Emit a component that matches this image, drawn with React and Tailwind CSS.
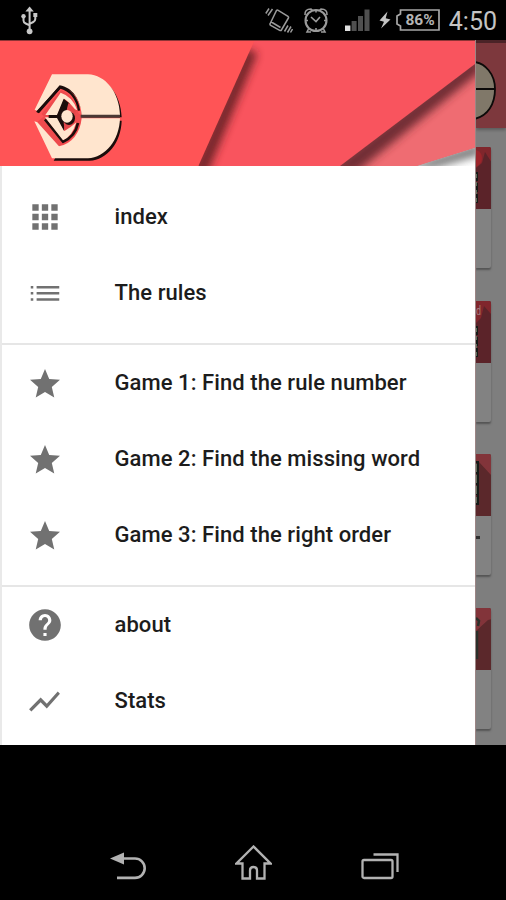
import React from 'react';

const sections = [
    [
        { icon: 'grid', label: 'index' },
        { icon: 'list', label: 'The rules' },
    ],
    [
        { icon: 'star', label: 'Game 1: Find the rule number' },
        { icon: 'star', label: 'Game 2: Find the missing word' },
        { icon: 'star', label: 'Game 3: Find the right order' },
    ],
    [
        { icon: 'help', label: 'about' },
        { icon: 'stats', label: 'Stats' },
    ],
];

// 24x24 material shapes
const iconPaths = {
    grid: 'M4 8h4V4H4v4zm6 12h4v-4h-4v4zm-6 0h4v-4H4v4zm0-6h4v-4H4v4zm6 0h4v-4h-4v4zm6-10v4h4V4h-4zm-6 4h4V4h-4v4zm6 6h4v-4h-4v4zm0 6h4v-4h-4v4z',
    list: 'M3 13h1.600v-1.600H3zm0 3.900h1.600v-1.600H3zm0-7.800h1.600V7.500H3zm3.700 3.900h14.300v-1.600H6.700zm0 3.900h14.300v-1.600H6.700zm0-9.400v1.600h14.300V7.500z',
    star: 'M12 17.27L18.18 21l-1.64-7.03L22 9.24l-7.19-.61L12 2 9.19 8.63 2 9.24l5.46 4.73L5.82 21z',
    help: 'M12 2C6.48 2 2 6.48 2 12s4.480 10 10 10 10-4.480 10-10S17.520 2 12 2zm1 17h-2v-2h2v2zm2.070-7.750l-.9.920C13.450 12.900 13 13.500 13 15h-2v-.5c0-1.100.450-2.100 1.170-2.830l1.240-1.260c.370-.360.590-.860.590-1.410 0-1.100-.9-2-2-2s-2 .9-2 2H8c0-2.210 1.790-4 4-4s4 1.790 4 4c0 .880-.360 1.680-.930 2.250z',
    stats: 'M3.500 18.490l6-6.010 4 4L22 6.920l-1.410-1.410-7.090 7.970-4-4L2 16.990z',
};

const iconSizes = {
    grid: 'size-[38px]',
    list: 'size-[38px]',
    star: 'mt-[2px] size-[36px]',
    help: 'size-[38px]',
    stats: 'size-[37px]',
};

const StatusBar = () => (
    <div className="flex h-10 shrink-0 items-center bg-black pr-[9px]">
        {/* USB */}
        <svg className="ml-5 h-[30px] w-[20px]" viewBox="0 0 20 30" fill="none" stroke="#c8c8c8" strokeWidth="2">
            <path d="M9.600 26V6M3.500 11v4.500q0 2 2.200 3l3.900 1.800M15.300 9v5q0 2-2 3l-3.700 1.800" />
            <path d="M9.600 1.500l4.200 5h-8.400z" fill="#c8c8c8" stroke="none" />
            <circle cx="9.600" cy="26.300" r="2.900" fill="#c8c8c8" stroke="none" />
            <circle cx="3.500" cy="11.300" r="2.200" fill="#c8c8c8" stroke="none" />
            <path d="M13.300 8h4v4h-4z" fill="#c8c8c8" stroke="none" />
        </svg>
        {/* Vibrate */}
        <svg className="ml-[225px] h-[28px] w-[28px]" viewBox="0 0 28 28" fill="none" stroke="#9b9b9b" strokeWidth="1.500">
            <path d="M11.500 4.500q.7-.8 1.700-.2l9.800 6q1 .7.400 1.700l-7 12q-.6 1-1.700.3l-9-5q-1.200-.7-.5-1.800zM5.500 15.500l10 6" />
            <path d="M.8 7.500l3.200-5M3 9.500L7.500 3M19.500 25.500l3.500-6M22.500 26.500l3.500-6M25.500 26.500l2-3.500" />
        </svg>
        {/* Alarm */}
        <svg className="ml-[10px] h-[28px] w-[26px]" viewBox="0 0 26 28" fill="none" stroke="#9b9b9b" strokeWidth="2.100">
            <circle cx="13" cy="14.500" r="10.500" />
            <path d="M8 11l5 4.500 4-4.500" strokeWidth="1.600" />
            <path d="M5.500 23L4 26h4M20.500 23l1.500 3h-4M2 9q-.5-6 6-6l1.500 1.600M24 9q.5-6-6-6l-1.500 1.600M13 4.500v2M13 22v2M3 14.500h2M21 14.500h2" strokeWidth="1.600" />
        </svg>
        {/* Signal */}
        <svg className="ml-[16px] h-[24px] w-[25px]" viewBox="0 0 25 24" fill="#505050">
            <path d="M0 17.500h5.400V23H0z" fill="#e0e0e0" />
            <path d="M6.600 13h5v10h-5zM13 8h5v15h-5zM19.500 1.500h5V23h-5z" />
        </svg>
        {/* Charging bolt */}
        <svg className="ml-[9px] h-[20px] w-[12px]" viewBox="0 0 12 20" fill="#c4c4c4">
            <path d="M8.500 1.500L.5 10.500l4.500 1.200L2 18.500l9.500-9-4.800-1.300z" />
        </svg>
        <div className="relative ml-[5px] flex h-[22px] w-[44px] items-center justify-center">
            <svg className="absolute inset-0 h-[22px] w-[44px]" viewBox="0 0 44 22" fill="none" stroke="#a8a8a8" strokeWidth="1.700">
                <path d="M4.500 1H43v20H4.500v-4L1 15V7l3.500-2z" />
            </svg>
            <span className="relative mt-px ml-1 text-[15.500px] leading-none font-bold text-[#b4b4b4]">86%</span>
        </div>
        <span className="mt-[3px] ml-auto text-[25px] leading-none text-[#c4c4c4]">4:50</span>
    </div>
);

const DrawerHeader = () => (
    <svg className="block h-[126px] w-full shrink-0" viewBox="0 0 1425 378" preserveAspectRatio="none">
        <defs>
            <filter id="soft" x="-20%" y="-20%" width="140%" height="140%">
                <feGaussianBlur stdDeviation="13" />
            </filter>
            <clipPath id="fold1">
                <path d="M764 0L595 378H1425V0z" />
            </clipPath>
            <clipPath id="fold2">
                <path d="M1020 378L1425 72V378z" />
            </clipPath>
            <clipPath id="fold3">
                <path d="M1250 378L1425 323V378z" />
            </clipPath>
        </defs>
        <path d="M0 0H1425V378H0z" fill="#ff5456" />
        <g clipPath="url(#fold1)">
            <path d="M764 0L595 378H1425V0z" fill="#f9545e" />
            <path d="M735 25L575 400H622L772 40z" fill="#6b2428" opacity=".93" filter="url(#soft)" />
        </g>
        <g clipPath="url(#fold2)">
            <path d="M1020 378L1425 72V378z" fill="#ef6c72" />
            <path d="M970 400L1440 35V95L1070 395z" fill="#6b2c30" opacity=".95" filter="url(#soft)" />
        </g>
        <g clipPath="url(#fold3)">
            <path d="M1250 378L1425 323V378z" fill="#fff" />
            <path d="M1200 385L1440 310V345L1300 385z" fill="#777" filter="url(#soft)" />
        </g>
        <path d="M0 0H1425V3H0z" fill="#8f3435" />

        {/* Logo: each cream part sits on its own dark offset copy */}
        <g transform="translate(84 78)">
            <g fill="#1b0d0b" transform="translate(5 7)">
                <path d="M72 25H180C232 27 274 78 276 147H157C158 100 132 64 95 58L28 135L20 131z" />
                <path d="M93 241C132 234 156 202 161 157H276C274 223 232 275 180 277H72z" />
            </g>
            {/* gap between the outer shell and the eye */}
            <path d="M40 144L99 73Q137 85 151 142L165 151L160 168Q144 224 93 242L28 168L48 151z" fill="#ee4a4d" />
            <g fill="#ffe5ce">
                <path d="M72 25H180C232 27 274 78 276 147H161C158 100 132 64 95 58L28 135L20 131z" />
                <path d="M19 166L28 169L93 241C132 234 156 202 161 157H276C274 223 232 275 180 277H72z" />
            </g>
            <path d="M28 138L96 64Q144 77 153 134" fill="none" stroke="#1b0d0b" strokeWidth="7" />
            <path d="M51 160L105 227Q142 211 150 171" fill="none" stroke="#1b0d0b" strokeWidth="8" />
            <g fill="#ffe5ce">
                <path d="M52 147L98 80Q135 92 148 133L141 130Q126 109 109 98L88 147z" />
                <path d="M51 154H88L109 195Q127 186 145 169Q132 212 105 223z" />
            </g>
            <path d="M62 147H87L107 98L124 112L120 130L101 151L110 172L108 194L87 156H62z" fill="#1b0d0b" />
            <path d="M121 111L143 135L141 167L110 194L107 170z" fill="#e3474a" />
            <ellipse cx="123" cy="157" rx="18" ry="20" fill="#1b0d0b" />
            <ellipse cx="117" cy="151" rx="17" ry="19" fill="#ffe5ce" />
            <path d="M158 151H276" stroke="#4a3834" strokeWidth="9" />
        </g>
    </svg>
);

const Drawer = () => (
    <div className="flex w-[475px] shrink-0 flex-col bg-white">
        <DrawerHeader />
        <div className="flex-1 border-l-2 border-[#e9e9e9] pt-[13px]">
            {sections.map((items, index) => (
                <div key={index} className={index > 0 ? 'mt-3 border-t-2 border-[#e6e6e6]' : ''}>
                    {items.map((item) => (
                        <div key={item.label} className="flex h-[76px] items-center">
                            <span className="ml-[18.500px] flex w-12 justify-center">
                                <svg className={iconSizes[item.icon]} viewBox="0 0 24 24" fill="#717171">
                                    <path d={iconPaths[item.icon]} />
                                </svg>
                            </span>
                            <span className="ml-[46px] text-[22px] leading-none font-medium tracking-[0.07px] whitespace-nowrap text-[#1c1c1c]">
                                {item.label}
                            </span>
                        </div>
                    ))}
                </div>
            ))}
        </div>
    </div>
);

// Right edge of a card, the part the drawer leaves uncovered
const cardArt = [
    { base: '#5b2329', fold: 'M0 0H16V16L9 5 6 16 0 21z', foldColor: '#80262c' },
    { base: '#5b2329', fold: 'M0 0H16V14L8 5 5 17 0 22z', foldColor: '#80262c' },
    { base: '#5b282b', fold: 'M0 0H16V22L3 8 0 7z', foldColor: '#82343a' },
    { base: '#5b282b', fold: 'M0 0H16V11L12 12 0 23z', foldColor: '#82343a' },
];

const CardEdge = ({ art, index }) => (
    <div className="h-[121px] w-[15px] shrink-0 overflow-hidden rounded-r-[2px] bg-[#828282] shadow-[0_2px_2px_#555]">
        <svg className="block h-[62px] w-4" viewBox="0 0 16 62">
            <path d="M0 0H16V62H0z" fill={art.base} />
            <path d={art.fold} fill={art.foldColor} />
            {index < 2 && <path d="M.5 25v31" stroke="#171b19" strokeWidth="3" strokeDasharray="9 2" />}
            {index < 2 && <path d="M.5 27v29" stroke="#65715f" strokeWidth="1" strokeDasharray="4 4" />}
            {index === 2 && <path d="M0 8h2v42h-2M0 19h2M0 30h2M0 40h2" fill="none" stroke="#171b19" strokeWidth="2" />}
            {index === 2 && <path d="M.5 10v39" stroke="#65715f" strokeWidth="1" strokeDasharray="8 3" />}
            {index === 3 && <path d="M0 10l3 3-1 5M1 23v28" fill="none" stroke="#2b302b" strokeWidth="2.500" />}
            {index === 0 && <path d="M0 3q6 2 6 8t-6 9z" fill="#9c252b" />}
            {index === 1 && (
                <text x="0" y="14" fontSize="12" fill="#a58080" textLength="5" lengthAdjust="spacingAndGlyphs">
                    d
                </text>
            )}
        </svg>
        {index === 2 && <div className="mt-5 h-[3px] w-1 bg-[#303030]" />}
    </div>
);

const PageBehind = () => (
    <div className="flex min-w-0 flex-1 flex-col overflow-hidden border-l border-[#9c8585] bg-[#7e7e7e]">
        <div className="h-[88px] shrink-0 border-t-[3px] border-[#4b2327] bg-[#7d383d] shadow-[0_2px_3px_#5c5c5c]">
            <svg className="block h-[85px] w-[30px]" viewBox="0 0 30 85">
                <path d="M-2 19C9 20 19 31 19 46S12 73-2 76" fill="#807869" stroke="#0c0a09" strokeWidth="1.800" />
                <path d="M-1 46H19" stroke="#0c0a09" strokeWidth="2" />
            </svg>
        </div>
        <div className="flex flex-col gap-[32.500px] pt-[19px]">
            {cardArt.map((art, index) => (
                <CardEdge key={index} art={art} index={index} />
            ))}
        </div>
    </div>
);

const NavigationBar = () => (
    <div className="flex flex-1 items-end justify-center gap-[89px] bg-black pr-[2px] pb-[18px] pl-1">
        <svg className="h-[34px] w-[37px]" viewBox="0 0 37 34" fill="none" stroke="#b2b2b2" strokeWidth="2.600">
            <path d="M13 10.500H26a9.700 9.700 0 010 19.400H8" />
            <path d="M1 10.500L15 4.500V16.500z" fill="#b2b2b2" stroke="none" />
        </svg>
        <svg className="h-[37px] w-[37px]" viewBox="0 0 37 37" fill="none" stroke="#b2b2b2" strokeWidth="2.300">
            <path d="M18.500 1.500L1.500 18.500H7.500V33.500H15V25.500q0-3.500 3.500-3.500T22 25.500v8h7.500v-15h6z" />
        </svg>
        <svg className="h-[30px] w-[38px]" viewBox="0 0 38 30" fill="none" stroke="#b2b2b2" strokeWidth="2.300">
            <rect x="1.500" y="8" width="30" height="18" rx="1.500" />
            <path d="M12.500 2.500H36.500V20" />
        </svg>
    </div>
);

const App = () => {
    return (
        <div className="flex h-[900px] w-[506px] flex-col overflow-hidden bg-black font-['Roboto',sans-serif]">
            <StatusBar />
            <div className="flex h-[705px] shrink-0 overflow-hidden">
                <Drawer />
                <PageBehind />
            </div>
            <NavigationBar />
        </div>
    );
};

export default App;
